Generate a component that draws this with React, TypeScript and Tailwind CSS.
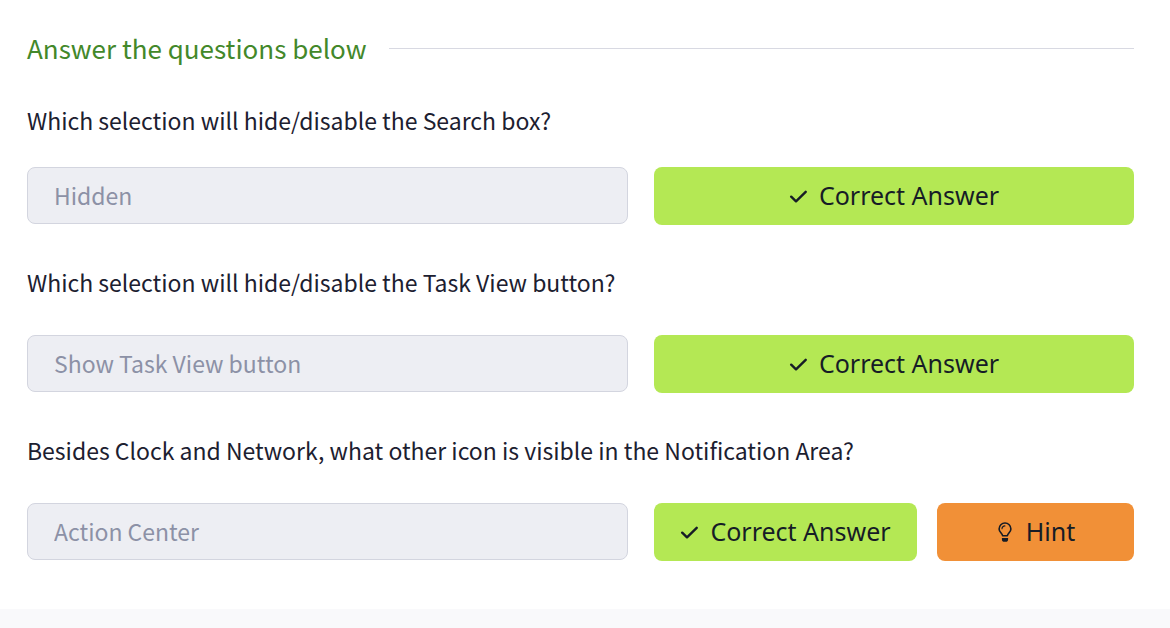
import React from "react";

const questionFont = "font-['Noto_Sans_CJK_SC',sans-serif]";
const buttonFont = "font-['Noto_Sans',sans-serif]";

interface Question {
  id: string;
  prompt: string;
  answer: string;
  hint?: boolean;
}

const questions: Question[] = [
  { id: "search-box", prompt: "Which selection will hide/disable the Search box?", answer: "Hidden" },
  { id: "task-view", prompt: "Which selection will hide/disable the Task View button?", answer: "Show Task View button" },
  {
    id: "notification-area",
    prompt: "Besides Clock and Network, what other icon is visible in the Notification Area?",
    answer: "Action Center",
    hint: true,
  },
];

function CheckIcon() {
  return (
    <svg
      className="h-5 w-[18px] shrink-0"
      viewBox="0 0 18 20"
      fill="none"
      stroke="currentColor"
      strokeWidth="2.4"
      strokeLinecap="round"
      strokeLinejoin="round"
      aria-hidden="true"
    >
      <path d="M2.2 10.7 7 15.3 16.7 5.8" />
    </svg>
  );
}

function BulbIcon() {
  return (
    <svg
      className="h-5 w-3.5 shrink-0"
      viewBox="0 0 14 20"
      fill="none"
      stroke="currentColor"
      strokeLinecap="round"
      strokeLinejoin="round"
      aria-hidden="true"
    >
      <path strokeWidth="1.6" d="M4.6 13.8C4.4 11.5 1.1 10.2 1.1 6.9a5.9 5.9 0 0 1 11.8 0c0 3.3-3.300 4.600-3.500 6.900Z" />
      <path strokeWidth="1.1" d="M4 6.800A2.900 2.900 0 0 1 6.900 3.900" />
      <path fill="currentColor" stroke="none" d="M3.900 16h6.200v1.200a2.600 2.600 0 0 1-2.600 2.600h-1a2.600 2.600 0 0 1-2.600-2.600Z" />
    </svg>
  );
}

function QuestionRow({ id, prompt, answer, hint }: Question) {
  return (
    <div className="group">
      <label
        htmlFor={id}
        className={`mb-[37px] block text-[23px] leading-8 text-[#1c2030] group-first:mb-[31px] ${questionFont}`}
      >
        {prompt}
      </label>
      <div className="grid grid-cols-[601fr_480fr] items-start gap-[26px]">
        <input
          id={id}
          type="text"
          value={answer}
          disabled
          readOnly
          className={`h-[57px] w-full min-w-0 rounded-lg border border-[#d3d5df] bg-[#edeef3] px-[26px] pb-0.5 text-[23px] text-[#8c91a6] ${questionFont}`}
        />
        <div className={`flex gap-5 text-[25px] text-[#161c26] ${buttonFont}`}>
          <button
            type="button"
            className="flex h-[58px] grow items-center justify-center gap-3 rounded-lg bg-[#b4e854] px-6 whitespace-nowrap"
          >
            <CheckIcon />
            Correct Answer
          </button>
          {hint && (
            <button
              type="button"
              className="flex h-[58px] w-[197px] shrink-0 items-center justify-center gap-3.5 rounded-lg bg-[#f19037] pl-0.5"
            >
              <BulbIcon />
              Hint
            </button>
          )}
        </div>
      </div>
    </div>
  );
}

export default function App() {
  return (
    <div className="min-h-screen bg-[#f9f9fb]">
      <main className="bg-white pt-[30px] pr-9 pb-12 pl-[27px]">
        <div className="mb-[38px] flex items-center gap-[22px]">
          <h2 className={`text-[26px] leading-9 text-[#43882a] ${questionFont}`}>Answer the questions below</h2>
          <hr className="grow border-[#d8d9e2]" />
        </div>
        <form className="flex flex-col gap-[41px]">
          {questions.map((question) => (
            <QuestionRow key={question.id} {...question} />
          ))}
        </form>
      </main>
    </div>
  );
}
